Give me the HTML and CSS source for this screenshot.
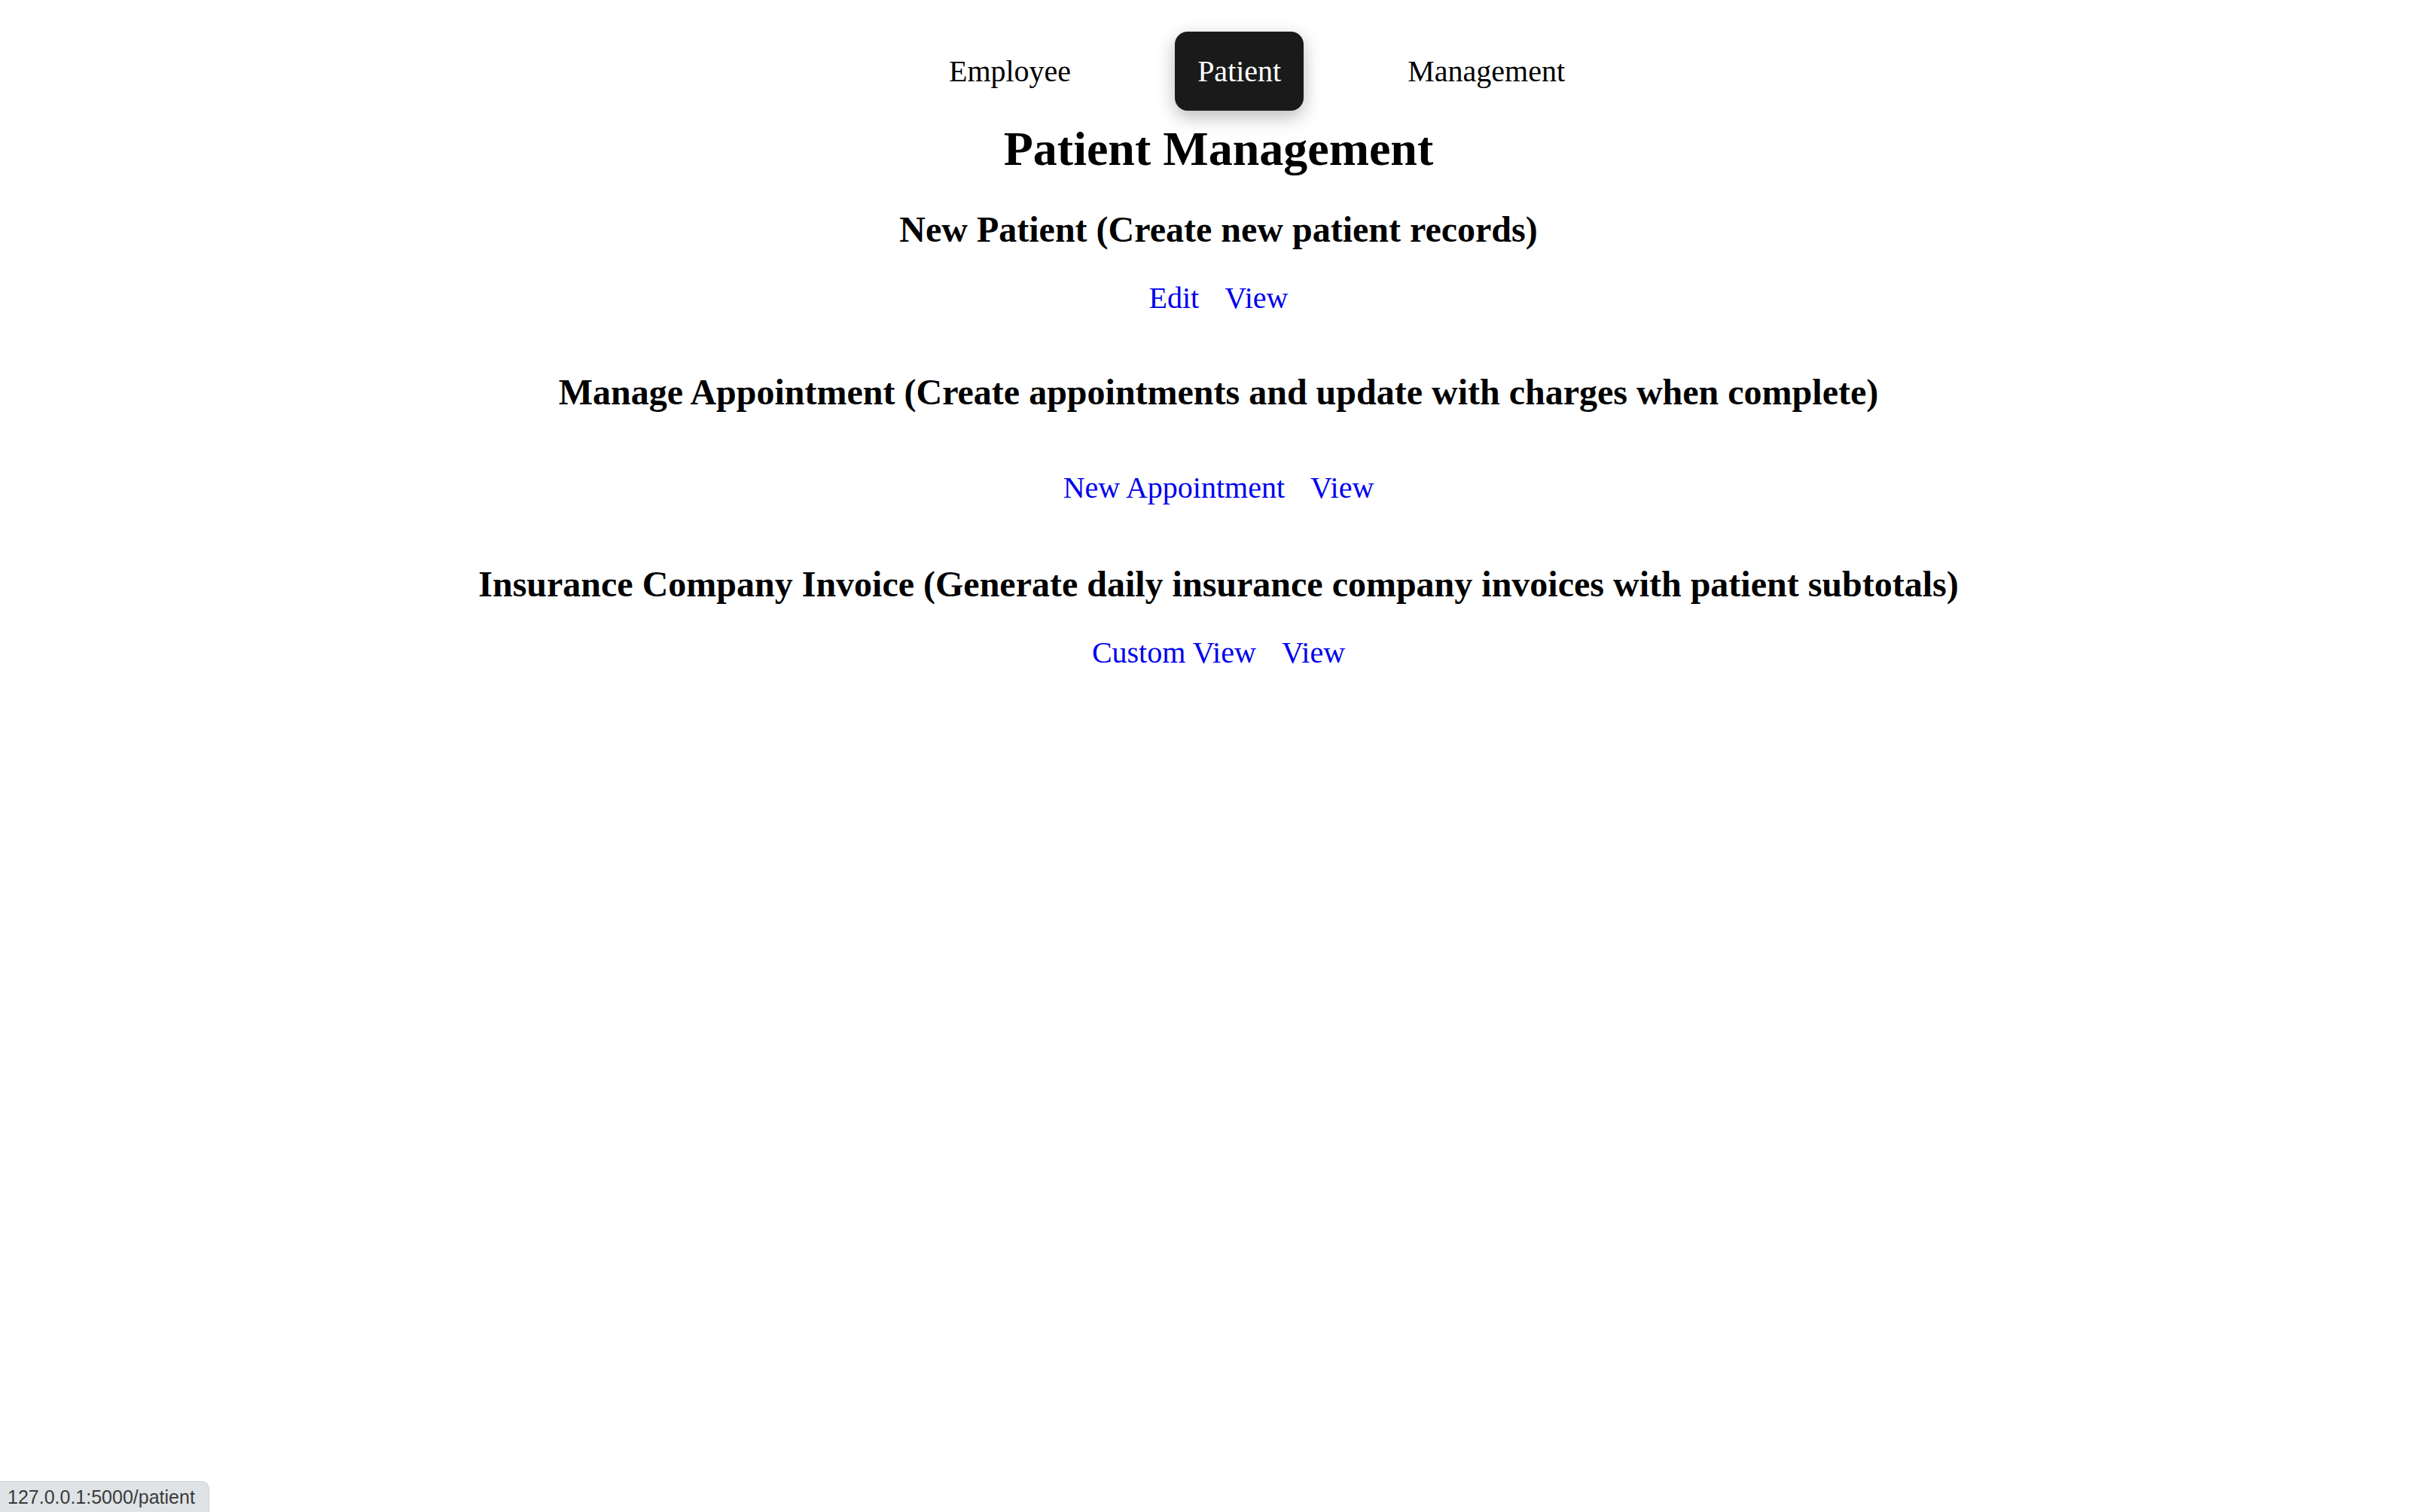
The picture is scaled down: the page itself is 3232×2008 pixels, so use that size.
FILE: index.html
```html
<!DOCTYPE html>
<html>
<head>
<meta charset="utf-8">
<title>Patient Management</title>
<link rel="stylesheet" href="styles.css">
</head>
<body>
<nav class="nav">
  <a class="nav-item" href="#">Employee</a>
  <a class="nav-item active" href="#">Patient</a>
  <a class="nav-item" href="#">Management</a>
</nav>
<main class="main">
  <h1 class="title">Patient Management</h1>
  <section class="section">
    <h2 class="section-title">New Patient (Create new patient records)</h2>
    <div class="links"><a href="#">Edit</a><a href="#">View</a></div>
  </section>
  <section class="section">
    <h2 class="section-title">Manage Appointment (Create appointments and update with charges when complete)</h2>
    <div class="links"><a href="#">New Appointment</a><a href="#">View</a></div>
  </section>
  <section class="section">
    <h2 class="section-title">Insurance Company Invoice (Generate daily insurance company invoices with patient subtotals)</h2>
    <div class="links"><a href="#">Custom View</a><a href="#">View</a></div>
  </section>
</main>
<div class="status">127.0.0.1:5000/patient</div>
</body>
</html>
```

FILE: styles.css
```css
html, body {
  margin: 0;
  padding: 0;
  background: #ffffff;
}
body {
  font-family: "Liberation Serif", "Times New Roman", serif;
  color: #000;
}
.nav {
  display: flex;
  justify-content: center;
  align-items: center;
  gap: 108px;
  padding: 42px 0 0 106px;
}
.nav-item {
  font-size: 40px;
  line-height: 46px;
  padding: 30px 30px 29px;
  color: #000;
  text-decoration: none;
  border-radius: 17px;
}
.nav-item.active {
  background: #1a1a1a;
  color: #fff;
  box-shadow: 0 8px 24px rgba(0, 0, 0, 0.28);
}
.main {
  text-align: center;
  padding-left: 4px;
}
.title {
  font-size: 64px;
  line-height: 74px;
  margin: 14px 0 0;
}
.section-title {
  font-size: 48px;
  line-height: 55px;
  margin: 0;
}
.section:nth-of-type(1) .section-title { margin-top: 42px; }
.section:nth-of-type(2) .section-title { margin-top: 74px; }
.section:nth-of-type(3) .section-title { margin-top: 77px; }
.links {
  display: flex;
  justify-content: center;
  gap: 34px;
  font-size: 40px;
  line-height: 46px;
  margin-top: 41px;
}
.section:nth-of-type(2) .links { margin-top: 77px; }
.links a {
  color: #0000ee;
  text-decoration: none;
}
.status {
  position: fixed;
  left: 0;
  bottom: 0;
  height: 40px;
  padding: 0 18px 0 10px;
  background: #dfe3e6;
  border-top: 1px solid #cfd4d8;
  border-right: 1px solid #cfd4d8;
  border-top-right-radius: 10px;
  font-family: "Liberation Sans", Arial, sans-serif;
  font-size: 25px;
  line-height: 40px;
  color: #3a3a3a;
}
```
